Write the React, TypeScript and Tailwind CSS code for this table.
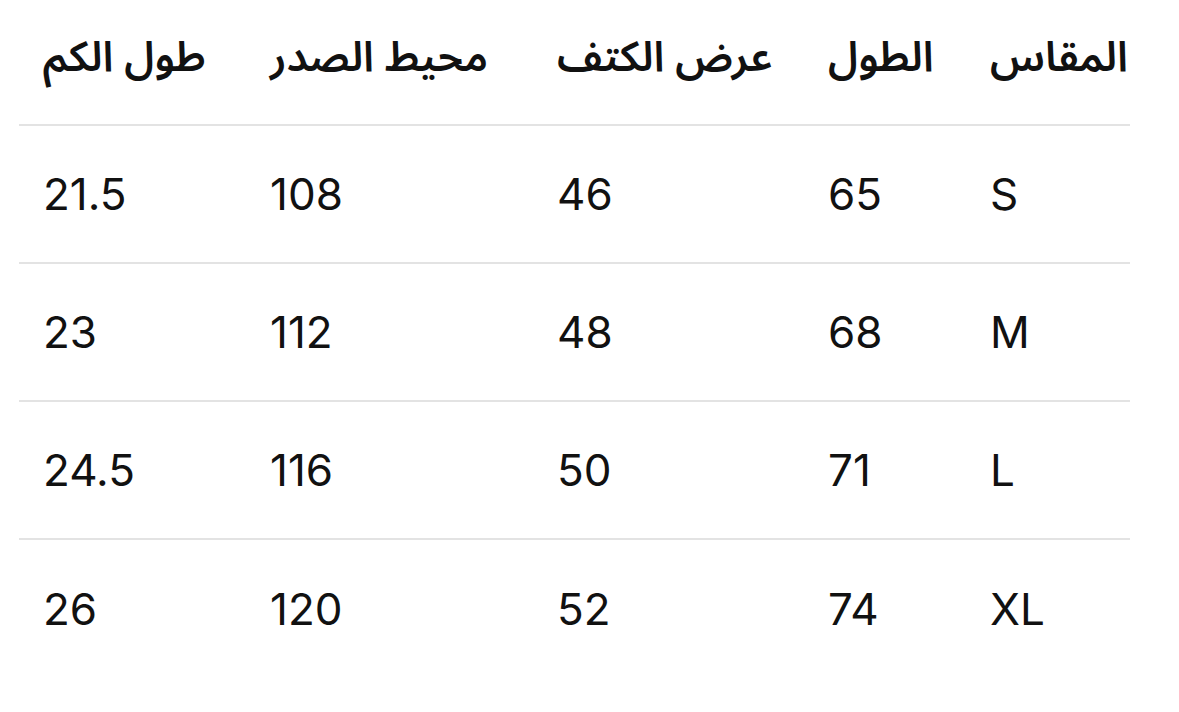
const header = ["المقاس", "الطول", "عرض الكتف", "محيط الصدر", "طول الكم"];

const rows = [
  ["S", "65", "46", "108", "21.5"],
  ["M", "68", "48", "112", "23"],
  ["L", "71", "50", "116", "24.5"],
  ["XL", "74", "52", "120", "26"],
];

const widths = ["w-[164px]", "w-[162px]", "w-[271px]", "w-[287px]", "w-[227px]"];

export default function App() {
  return (
    <div className="min-h-screen bg-white pl-[19px] text-[#111]" style={{ fontFamily: "Inter, 'DejaVu Sans', sans-serif" }}>
      <table dir="rtl" className="w-[1111px] table-fixed border-collapse">
        <thead>
          <tr className="h-[125px]">
            {header.map((h, i) => (
              <th
                key={h}
                className={`${widths[i]} pb-[8px] pl-6 text-left align-middle text-[42px] font-semibold leading-none whitespace-nowrap`}
                style={{ fontFamily: "'Noto Sans Arabic', 'Noto Kufi Arabic', 'DejaVu Sans', sans-serif" }}
              >
                {h}
              </th>
            ))}
          </tr>
        </thead>
        <tbody>
          {rows.map((r) => (
            <tr key={r[0]} className="h-[138px] border-t-2 border-[#e3e3e3]">
              {r.map((c, i) => (
                <td key={i} className="pl-6 text-left align-middle text-[44px] font-normal">
                  {c}
                </td>
              ))}
            </tr>
          ))}
        </tbody>
      </table>
    </div>
  );
}
